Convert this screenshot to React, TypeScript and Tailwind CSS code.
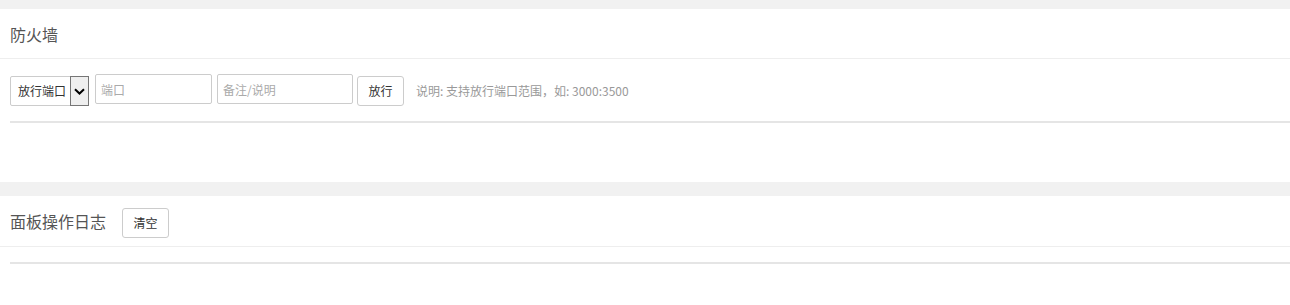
import React from "react";

export default function App() {
  const font = { fontFamily: '"Microsoft YaHei", "Noto Sans CJK SC", "Noto Sans", sans-serif' };
  return (
    <div className="w-[1290px] h-[305px] bg-[#f1f1f1] pt-[9px] overflow-hidden" style={font}>
      <div className="bg-white">
        <div className="h-[50px] border-b border-[#eeeeee] px-[10px] flex items-center text-[16px] text-[#555555]">
          防火墙
        </div>
        <div className="pl-[10px] pt-[15px]">
          <div className="flex items-start h-[32px]">
            <div className="mt-[2px] h-[30px] w-[79px] flex border border-[#cccccc] rounded-[2px] bg-white">
              <div className="flex-1 flex items-center pl-[7px] text-[12px] text-[#333333]">放行端口</div>
              <div className="w-[19px] bg-[#efefef] border border-[#767676] flex items-center justify-center -mr-px -my-px h-[30px] self-center">
                <svg width="11" height="7" viewBox="0 0 11 7">
                  <path d="M1 1.2 L5.5 5.5 L10 1.2" fill="none" stroke="#000" strokeWidth="2" />
                </svg>
              </div>
            </div>
            <input
              className="ml-[6px] h-[30px] w-[117px] border border-[#cccccc] rounded-[2px] px-[5px] text-[12px] outline-none placeholder:text-[#aaaaaa]"
              placeholder="端口"
            />
            <input
              className="ml-[5px] h-[30px] w-[136px] border border-[#cccccc] rounded-[2px] px-[5px] text-[12px] outline-none placeholder:text-[#aaaaaa]"
              placeholder="备注/说明"
            />
            <button className="ml-[4px] mt-[2px] h-[30px] w-[47px] border border-[#cccccc] rounded-[3px] bg-white text-[12px] text-[#333333]">
              放行
            </button>
            <span className="ml-[12px] self-center mt-[2px] text-[12px] text-[#999999]">
              说明: 支持放行端口范围，如: 3000:3500
            </span>
          </div>
          <div className="mt-[15px] h-[2px] bg-[#e5e5e5]"></div>
          <div className="h-[59px]"></div>
        </div>
      </div>
      <div className="h-[14px]"></div>
      <div className="bg-white h-[200px]">
        <div className="h-[51px] border-b border-[#eeeeee] px-[10px] flex items-center text-[16px] text-[#555555]">
          <span>面板操作日志</span>
          <button className="ml-[16px] mt-[4px] h-[30px] w-[47px] border border-[#cccccc] rounded-[3px] bg-white text-[12px] text-[#333333]">
            清空
          </button>
        </div>
        <div className="pl-[10px] pt-[15px]">
          <div className="h-[2px] bg-[#e5e5e5]"></div>
        </div>
      </div>
    </div>
  );
}
